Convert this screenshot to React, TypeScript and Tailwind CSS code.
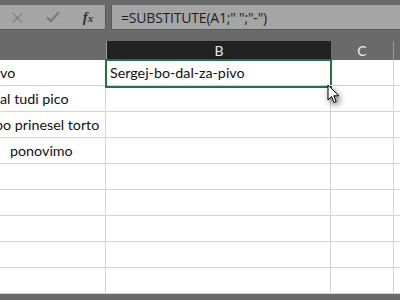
import React from 'react';

const rows = [
  { text: 'vo', shift: 'ml-0' },
  { text: 'al tudi pico', shift: 'ml-0' },
  { text: 'bo prinesel torto', shift: 'ml-[-5px]' },
  { text: 'ponovimo', shift: 'ml-[10px]' },
  { text: '', shift: 'ml-0' },
  { text: '', shift: 'ml-0' },
  { text: '', shift: 'ml-0' },
  { text: '', shift: 'ml-0' },
  { text: '', shift: 'ml-0' },
];

function Cursor() {
  return (
    <svg
      className="absolute left-[327px] top-[84px] drop-shadow-[2px_3px_3px_rgba(0,0,0,0.6)]"
      width="14"
      height="21"
      viewBox="0 0 14 21"
    >
      <path
        d="M1 1 L1 16 L4.5 12.5 L7 18.5 L9.2 17.6 L6.8 11.8 L11.8 11.8 Z"
        fill="#fff"
        stroke="#000"
        strokeWidth="1"
        strokeLinejoin="round"
      />
    </svg>
  );
}

export default function App() {
  return (
    <div className="relative w-[400px] h-[300px] overflow-hidden bg-[#6a6a6a] font-['Lato',sans-serif]">
      {/* Formula bar */}
      <div className="flex gap-[5px] pt-[5px] h-[30px]">
        <div className="w-[106px] h-[25px] bg-[#a5a5a5] border-r border-b border-[#5a5a5a] flex items-center">
          <span className="ml-[9px] text-[20px] leading-none text-[#7a7a7a] font-['DejaVu_Sans',sans-serif] font-light">×</span>
          <svg className="ml-[20px]" width="14" height="12" viewBox="0 0 14 12">
            <path d="M1 6.5 L5 10 L13 1" fill="none" stroke="#7a7a7a" strokeWidth="2" />
          </svg>
          <span className="ml-[23px] text-[15px] leading-none italic font-bold text-[#333] font-['Liberation_Serif',serif]">
            f<span className="text-[11px]">x</span>
          </span>
        </div>
        <div className="flex-1 h-[25px] bg-[#a5a5a5] border-l border-b border-[#5a5a5a] flex items-center pl-[9px]">
          <span className="text-[14px] text-[#1e1e1e] font-['Open_Sans',sans-serif] tracking-[-0.2px]">
            =SUBSTITUTE(A1;" ";"-")
          </span>
        </div>
      </div>

      {/* Column headers */}
      <div className="flex mt-[11px] h-[19px]">
        <div className="w-[106px]" />
        <div className="w-[225px] bg-[#222] flex items-center justify-center text-[14px] text-[#e8e8e8] border-l border-[#9a9a9a]">
          B
        </div>
        <div className="w-[63px] flex items-center justify-center text-[14px] text-[#f0f0f0] border-r border-[#9a9a9a]">
          C
        </div>
      </div>

      {/* Grid */}
      <div className="bg-white">
        {rows.map((r, i) => (
          <div key={i} className="flex h-[26px] border-b border-[#d4d4d4]">
            <div className="w-[106px] border-r border-[#d4d4d4] overflow-hidden flex items-center">
              <span className={`whitespace-nowrap text-[14.3px] text-[#111] ${r.shift}`}>{r.text}</span>
            </div>
            <div className="w-[225px] border-r border-[#d4d4d4] flex items-center pl-[4px]">
              {i === 0 && <span className="whitespace-nowrap text-[14.3px] text-[#111]">Sergej-bo-dal-za-pivo</span>}
            </div>
            <div className="w-[63px] border-r border-[#d4d4d4]" />
          </div>
        ))}
      </div>

      {/* Selection */}
      <div className="absolute left-[105px] top-[59px] w-[227px] h-[29px] border-2 border-[#217346]" />
      <div className="absolute left-[328px] top-[85px] w-[5px] h-[5px] bg-[#217346] border border-white" />
      <Cursor />
    </div>
  );
}
